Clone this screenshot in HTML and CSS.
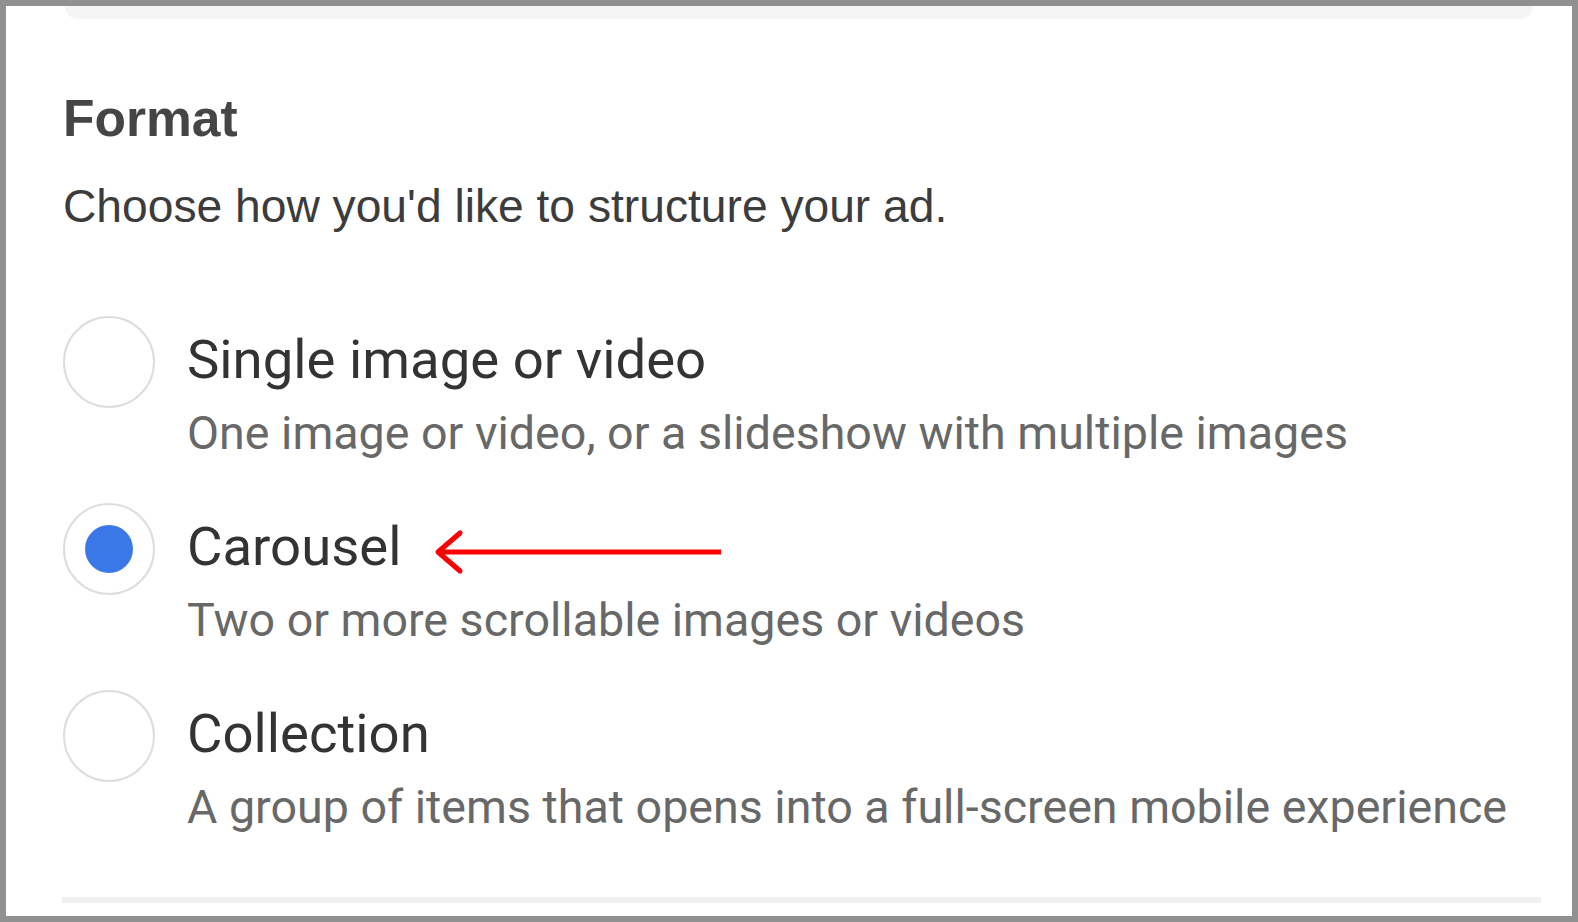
FILE: index.html
```html
<!DOCTYPE html>
<html>
<head>
<meta charset="utf-8">
<link rel="stylesheet" href="styles.css">
</head>
<body>
<div class="frame">
  <div class="top-card"></div>
  <div class="content">
    <h2 class="heading">Format</h2>
    <p class="lead">Choose how you'd like to structure your ad.</p>
    <div class="options">
      <div class="option">
        <span class="radio"></span>
        <div class="text">
          <div class="title">Single image or video</div>
          <div class="sub">One image or video, or a slideshow with multiple images</div>
        </div>
      </div>
      <div class="option">
        <span class="radio checked"><span class="dot"></span></span>
        <div class="text">
          <div class="title-row">
            <span class="title">Carousel</span>
            <svg class="arrow" width="292" height="46" viewBox="0 0 292 46">
              <path d="M5 23 H288" stroke="#ff0000" stroke-width="5" fill="none"/>
              <path d="M27 4 L5 23 L27 42" stroke="#ff0000" stroke-width="5" fill="none" stroke-linecap="round" stroke-linejoin="round"/>
            </svg>
          </div>
          <div class="sub">Two or more scrollable images or videos</div>
        </div>
      </div>
      <div class="option">
        <span class="radio"></span>
        <div class="text">
          <div class="title">Collection</div>
          <div class="sub">A group of items that opens into a full-screen mobile experience</div>
        </div>
      </div>
    </div>
    <div class="divider"></div>
  </div>
</div>
</body>
</html>
```

FILE: styles.css
```css
html, body {
  margin: 0;
  padding: 0;
  background: #ffffff;
}

.frame {
  box-sizing: border-box;
  width: 1578px;
  height: 922px;
  border: 6px solid #909090;
  background: #ffffff;
  overflow: hidden;
}

.top-card {
  height: 13px;
  margin: 0 39px 0 59px;
  background: #f5f5f5;
  border-radius: 0 0 22px 22px;
}

.content {
  padding-left: 56px;
}

.heading {
  margin: 69px 0 0 1px;
  font-family: "Liberation Sans", Arial, sans-serif;
  font-weight: 700;
  font-size: 51.5px;
  line-height: 60px;
  color: #454545;
}

.lead {
  margin: 31px 0 0 1px;
  font-family: "Liberation Sans", Arial, sans-serif;
  font-size: 46.2px;
  line-height: 54px;
  color: #3c3c3c;
}

.options {
  margin-top: 83px;
  display: flex;
  flex-direction: column;
  gap: 33px;
}

.option {
  display: flex;
  align-items: flex-start;
}

.radio {
  box-sizing: border-box;
  flex: none;
  width: 92px;
  height: 92px;
  margin-left: 1px;
  border: 2px solid #dddddd;
  border-radius: 50%;
  display: flex;
  align-items: center;
  justify-content: center;
}

.dot {
  width: 48px;
  height: 48px;
  border-radius: 50%;
  background: #3b78e7;
}

.text {
  margin-left: 32px;
  padding-top: 6px;
  font-family: Roboto, "Liberation Sans", sans-serif;
}

.title {
  font-size: 54.5px;
  line-height: 74px;
  color: #333333;
}

.title-row {
  display: flex;
  align-items: flex-start;
}

.arrow {
  flex: none;
  margin-left: 32px;
  margin-top: 20px;
}

.sub {
  font-size: 46.6px;
  line-height: 74px;
  color: #686868;
}

.divider {
  height: 6px;
  margin: 53px 31px 0 0;
  background: #f0f0f0;
}
```
